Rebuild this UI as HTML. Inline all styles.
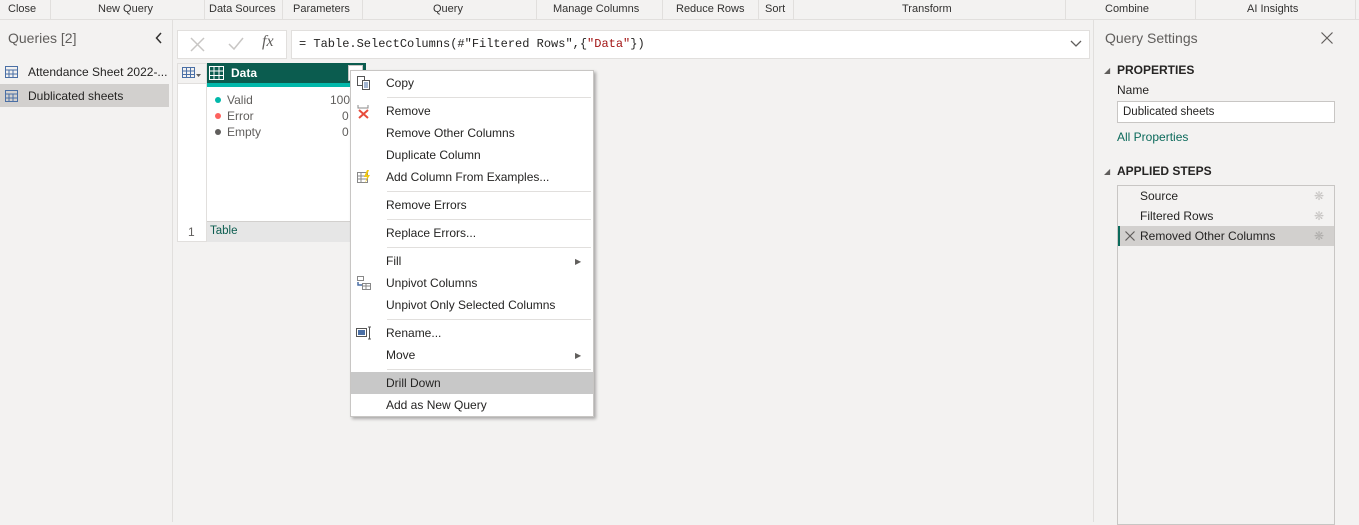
<!DOCTYPE html><html><head><style>
*{box-sizing:border-box;margin:0;padding:0}
body{width:1359px;height:522px;overflow:hidden;background:#f3f2f1;font-family:"Segoe UI","Liberation Sans",sans-serif;font-size:12px;color:#252423;position:relative}
.a{position:absolute}
.rib{top:0;left:0;width:1359px;height:20px;border-bottom:1px solid #e1dfdd;background:#f3f2f1}
.rib span{position:absolute;top:3px;font-size:11px;color:#323130}
.sep{position:absolute;top:0;width:1px;height:19px;background:#e1dfdd}
.mi{position:absolute;left:35px;font-size:12px;color:#252423}
.hr{position:absolute;left:36px;right:2px;height:1px;background:#e1dfdd}
</style></head><body>
<div class="a rib">
<span style="left:8px">Close</span><div class="sep" style="left:50px"></div>
<span style="left:98px">New Query</span><div class="sep" style="left:204px"></div>
<span style="left:209px">Data Sources</span><div class="sep" style="left:282px"></div>
<span style="left:293px">Parameters</span><div class="sep" style="left:362px"></div>
<span style="left:433px">Query</span><div class="sep" style="left:536px"></div>
<span style="left:553px">Manage Columns</span><div class="sep" style="left:662px"></div>
<span style="left:676px">Reduce Rows</span><div class="sep" style="left:758px"></div>
<span style="left:765px">Sort</span><div class="sep" style="left:793px"></div>
<span style="left:902px">Transform</span><div class="sep" style="left:1065px"></div>
<span style="left:1105px">Combine</span><div class="sep" style="left:1195px"></div>
<span style="left:1247px">AI Insights</span><div class="sep" style="left:1355px"></div>
</div>
<!-- left pane -->
<div class="a" style="left:172px;top:20px;width:1px;height:502px;background:#e1dfdd"></div>
<div class="a" style="left:8px;top:30px;font-size:14px;color:#605e5c">Queries [2]</div>
<svg class="a" style="left:155px;top:32px" width="8" height="12"><path d="M6 1L1.5 6 6 11" fill="none" stroke="#323130" stroke-width="1.5"/></svg>
<div class="a" style="left:0;top:84px;width:169px;height:23px;background:#d2d0ce"></div>
<svg class="a" style="left:5px;top:66px" width="14" height="40"><g fill="none" stroke="#4a6fa5" stroke-width="1"><rect x="0.5" y="0.5" width="12" height="11"/><path d="M0 4h13M0 8h13M4 4v8M8 4v8"/><rect x="0.5" y="24.5" width="12" height="11"/><path d="M0 28h13M0 32h13M4 28v8M8 28v8"/></g></svg>
<div class="a" style="left:28px;top:65px;font-size:12px;white-space:nowrap">Attendance Sheet 2022-...</div>
<div class="a" style="left:28px;top:89px;font-size:12px">Dublicated sheets</div>
<!-- formula bar -->
<div class="a" style="left:177px;top:30px;width:110px;height:29px;background:#fff;border:1px solid #e1dfdd"></div>
<svg class="a" style="left:190px;top:37px" width="15" height="15"><path d="M1 1l13 13M14 1L1 14" stroke="#c8c6c4" stroke-width="1.5"/></svg>
<svg class="a" style="left:228px;top:37px" width="16" height="14"><path d="M1 7l5 5L15 1" fill="none" stroke="#c8c6c4" stroke-width="1.5"/></svg>
<div class="a" style="left:262px;top:33px;font-size:16px;font-style:italic;font-family:'Liberation Serif',serif;color:#605e5c">fx</div>
<div class="a" style="left:291px;top:30px;width:799px;height:29px;background:#fff;border:1px solid #e1dfdd"></div>
<div class="a" style="left:299px;top:37px;font-family:'Liberation Mono',monospace;font-size:12px">= Table.SelectColumns(#"Filtered Rows",{<span style="color:#a31515">"Data"</span>})</div>
<svg class="a" style="left:1070px;top:40px" width="12" height="8"><path d="M1 1l5 5 5-5" fill="none" stroke="#605e5c" stroke-width="1.3"/></svg>
<!-- grid -->
<div class="a" style="left:177px;top:63px;width:30px;height:179px;background:#fff;border:1px solid #e1dfdd"></div>
<div class="a" style="left:177px;top:63px;width:30px;height:21px;background:#f3f2f1;border:1px solid #e1dfdd"></div>
<svg class="a" style="left:182px;top:67px" width="20" height="12"><g fill="none" stroke="#4a6fa5"><rect x="0.5" y="0.5" width="12" height="10"/><path d="M0 4h13M0 7.5h13M4.5 0v11M8.5 0v11"/></g><path d="M14 7h5l-2.5 3z" fill="#605e5c"/></svg>
<div class="a" style="left:207px;top:63px;width:159px;height:20px;background:#0b5c4f"></div>
<svg class="a" style="left:209px;top:66px" width="16" height="15"><g fill="none" stroke="#fff"><rect x="0.5" y="0.5" width="14" height="13"/><path d="M0 5h15M0 9.5h15M5 0v14M10 0v14"/></g></svg>
<div class="a" style="left:231px;top:66px;color:#fff;font-weight:bold;font-size:12px">Data</div>
<div class="a" style="left:348px;top:65px;width:15px;height:16px;background:#fff;border:1px solid #c8c6c4"></div>
<div class="a" style="left:207px;top:83px;width:159px;height:4px;background:#01b8aa"></div>
<div class="a" style="left:207px;top:87px;width:144px;height:134px;background:#fff;border-right:1px solid #e1dfdd"></div>
<div class="a" style="left:215px;top:97px;width:6px;height:6px;border-radius:3px;background:#01b8aa"></div>
<div class="a" style="left:215px;top:113px;width:6px;height:6px;border-radius:3px;background:#fd625e"></div>
<div class="a" style="left:215px;top:129px;width:6px;height:6px;border-radius:3px;background:#605e5c"></div>
<div class="a" style="left:227px;top:93px;color:#605e5c">Valid</div><div class="a" style="left:330px;top:93px;color:#605e5c">100</div>
<div class="a" style="left:227px;top:109px;color:#605e5c">Error</div><div class="a" style="left:342px;top:109px;color:#605e5c">0</div>
<div class="a" style="left:227px;top:125px;color:#605e5c">Empty</div><div class="a" style="left:342px;top:125px;color:#605e5c">0</div>
<div class="a" style="left:207px;top:221px;width:144px;height:21px;background:#e6e6e6;border-top:1px solid #d2d0ce"></div>
<div class="a" style="left:188px;top:225px;color:#605e5c">1</div>
<div class="a" style="left:210px;top:225px;color:#0b5c4f;font-size:11.5px">Table</div>
<!-- context menu -->
<div class="a" style="left:350px;top:70px;width:244px;height:347px;background:#fff;border:1px solid #c8c6c4;box-shadow:2px 2px 3px rgba(0,0,0,.3)">
<div class="mi" style="top:5px">Copy</div><div class="hr" style="top:26px"></div>
<div class="mi" style="top:33px">Remove</div>
<div class="mi" style="top:55px">Remove Other Columns</div>
<div class="mi" style="top:77px">Duplicate Column</div>
<div class="mi" style="top:99px">Add Column From Examples...</div><div class="hr" style="top:120px"></div>
<div class="mi" style="top:127px">Remove Errors</div><div class="hr" style="top:148px"></div>
<div class="mi" style="top:155px">Replace Errors...</div><div class="hr" style="top:176px"></div>
<div class="mi" style="top:183px">Fill</div><div class="a" style="left:224px;top:186px;font-size:8px;color:#605e5c">&#9654;</div>
<div class="mi" style="top:205px">Unpivot Columns</div>
<div class="mi" style="top:227px">Unpivot Only Selected Columns</div><div class="hr" style="top:248px"></div>
<div class="mi" style="top:255px">Rename...</div>
<div class="mi" style="top:277px">Move</div><div class="a" style="left:224px;top:280px;font-size:8px;color:#605e5c">&#9654;</div><div class="hr" style="top:298px"></div>
<div class="a" style="left:0;top:301px;width:242px;height:22px;background:#c8c8c8"></div>
<div class="mi" style="top:305px">Drill Down</div>
<div class="mi" style="top:327px">Add as New Query</div>
<svg class="a" style="left:5px;top:4px" width="16" height="16"><g fill="none" stroke="#555"><rect x="1.5" y="1.5" width="7" height="9"/><rect x="6.5" y="5.5" width="7" height="9" fill="#fff"/><path d="M8 8h4M8 10h4M8 12h4" stroke="#4a6fa5"/></g></svg>
<svg class="a" style="left:5px;top:32px" width="16" height="16"><path d="M2 2v3h10V2" fill="none" stroke="#888"/><path d="M3 7l9 8M12 7l-9 8" stroke="#e74c3c" stroke-width="2"/></svg>
<svg class="a" style="left:5px;top:98px" width="16" height="16"><g fill="none" stroke="#888"><rect x="1.5" y="3.5" width="10" height="10"/><path d="M1 7h11M1 10h11M5 3v11"/></g><path d="M11 1l-3 7h3l-2 6 5-8h-3l2-5z" fill="#f2c811"/></svg>
<svg class="a" style="left:5px;top:204px" width="16" height="16"><g fill="none" stroke="#888"><rect x="1.5" y="1.5" width="6" height="4"/><rect x="6.5" y="8.5" width="8" height="6"/><path d="M7 11h8M10 9v6"/></g><path d="M2 7v3h4" fill="none" stroke="#4a6fa5" stroke-width="1.5"/></svg>
<svg class="a" style="left:5px;top:254px" width="16" height="16"><rect x="0.5" y="3.5" width="10" height="8" fill="none" stroke="#555"/><rect x="2" y="5" width="7" height="5" fill="#4a6fa5"/><path d="M12 2h3M13.5 2v12M12 14h3" stroke="#555" fill="none"/></svg>
</div>
<!-- right pane -->
<div class="a" style="left:1093px;top:20px;width:1px;height:502px;background:#e1dfdd"></div>
<div class="a" style="left:1105px;top:30px;font-size:14px;color:#605e5c">Query Settings</div>
<svg class="a" style="left:1321px;top:32px" width="12" height="12"><path d="M0.5 0.5l11 11M11.5 0.5l-11 11" stroke="#605e5c" stroke-width="1.2"/></svg>
<div class="a" style="left:1104px;top:66px;font-size:8px;color:#605e5c">&#9698;</div>
<div class="a" style="left:1117px;top:63px;font-weight:bold;font-size:12px">PROPERTIES</div>
<div class="a" style="left:1117px;top:83px">Name</div>
<div class="a" style="left:1117px;top:101px;width:218px;height:22px;background:#fff;border:1px solid #c8c6c4;padding:4px 5px;font-size:11.5px">Dublicated sheets</div>
<div class="a" style="left:1117px;top:130px;color:#0b6a5b">All Properties</div>
<div class="a" style="left:1104px;top:167px;font-size:8px;color:#605e5c">&#9698;</div>
<div class="a" style="left:1117px;top:164px;font-weight:bold;font-size:12px">APPLIED STEPS</div>
<div class="a" style="left:1117px;top:185px;width:218px;height:340px;border:1px solid #c8c6c4;background:#f3f2f1"></div>
<div class="a" style="left:1118px;top:226px;width:216px;height:20px;background:#d2d0ce;border-left:2px solid #0b6a5b"></div>
<div class="a" style="left:1140px;top:189px">Source</div>
<div class="a" style="left:1140px;top:209px">Filtered Rows</div>
<svg class="a" style="left:1125px;top:231px" width="10" height="10"><path d="M0.5 0.5l9 9M9.5 0.5l-9 9" stroke="#605e5c" stroke-width="1.2"/></svg>
<div class="a" style="left:1140px;top:229px">Removed Other Columns</div>
<div class="a" style="left:1314px;top:189px;color:#c8c6c4">&#10059;</div>
<div class="a" style="left:1314px;top:209px;color:#c8c6c4">&#10059;</div>
<div class="a" style="left:1314px;top:229px;color:#b0aeac">&#10059;</div>
</body></html>
